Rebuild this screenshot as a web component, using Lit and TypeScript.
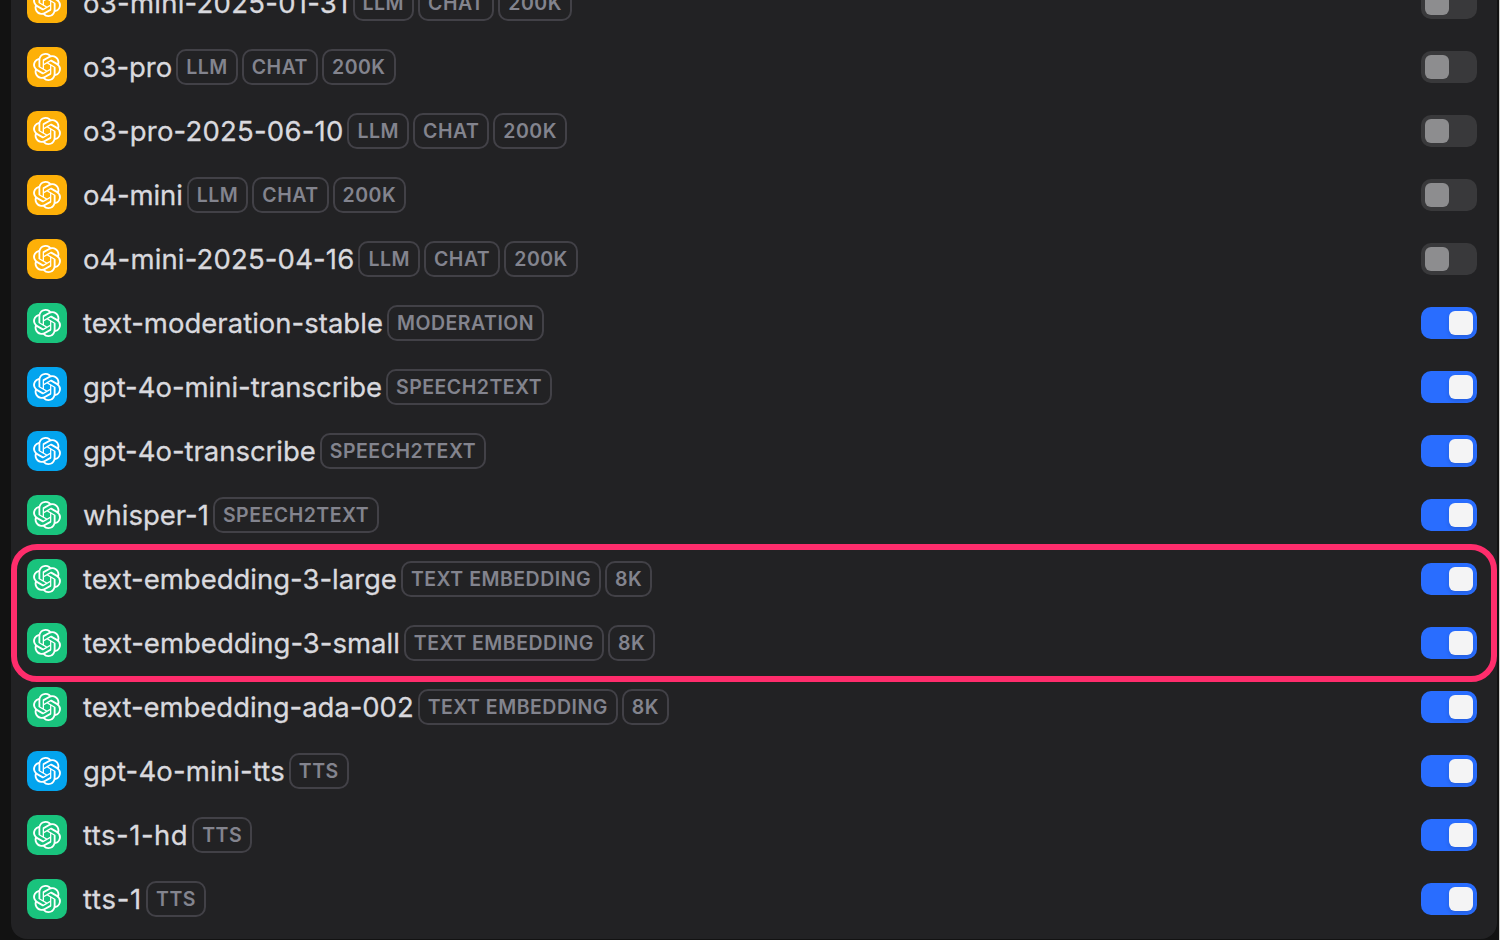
import { LitElement, html, css } from "lit";
import { customElement, property } from "lit/decorators.js";
import { classMap } from "lit/directives/class-map.js";
import { styleMap } from "lit/directives/style-map.js";

type Tone = "amber" | "green" | "blue";

interface Model {
  name: string;
  tone: Tone;
  tracking: number;
  tags: string[];
  on: boolean;
}

const m = (name: string, tone: Tone, tracking: number, on: boolean, ...tags: string[]): Model => ({
  name, tone, tracking, on, tags,
});

const BEFORE: Model[] = [
  m("o3-mini-2025-01-31", "amber", 0.26, false, "LLM", "CHAT", "200K"),
  m("o3-pro", "amber", -0.03, false, "LLM", "CHAT", "200K"),
  m("o3-pro-2025-06-10", "amber", 0.21, false, "LLM", "CHAT", "200K"),
  m("o4-mini", "amber", -0.12, false, "LLM", "CHAT", "200K"),
  m("o4-mini-2025-04-16", "amber", 0.16, false, "LLM", "CHAT", "200K"),
  m("text-moderation-stable", "green", 0.01, true, "MODERATION"),
  m("gpt-4o-mini-transcribe", "blue", -0.03, true, "SPEECH2TEXT"),
  m("gpt-4o-transcribe", "blue", -0.03, true, "SPEECH2TEXT"),
  m("whisper-1", "green", 0, true, "SPEECH2TEXT"),
];
const MARKED: Model[] = [
  m("text-embedding-3-large", "green", -0.01, true, "TEXT EMBEDDING", "8K"),
  m("text-embedding-3-small", "green", 0.01, true, "TEXT EMBEDDING", "8K"),
];
const AFTER: Model[] = [
  m("text-embedding-ada-002", "green", -0.05, true, "TEXT EMBEDDING", "8K"),
  m("gpt-4o-mini-tts", "blue", 0.15, true, "TTS"),
  m("tts-1-hd", "green", 0.5, true, "TTS"),
  m("tts-1", "green", 0.72, true, "TTS"),
];

@customElement("model-icon")
class ModelIcon extends LitElement {
  @property() tone: Tone = "green";
  static styles = css`
    :host { display: block; flex: none; }
    .tile {
      display: flex; align-items: center; justify-content: center;
      width: 40px; height: 40px; border-radius: 10px;
    }
    .amber { background: #fdb008; }
    .green { background: #19c37d; }
    .blue { background: #03a4ee; }
    svg { display: block; width: 28px; height: 28px; fill: #fff; }
  `;
  render() {
    return html`<div class="tile ${this.tone}">
      <svg viewBox="0 0 24 24" aria-hidden="true">
        <path d="M22.2819 9.8211a5.9847 5.9847 0 0 0-.5157-4.9108 6.0462 6.0462 0 0 0-6.5098-2.9A6.0651 6.0651 0 0 0 4.9807 4.1818a5.9847 5.9847 0 0 0-3.9977 2.9 6.0462 6.0462 0 0 0 .7427 7.0966 5.98 5.98 0 0 0 .511 4.9107 6.051 6.051 0 0 0 6.5146 2.9001A5.9847 5.9847 0 0 0 13.2599 24a6.0557 6.0557 0 0 0 5.7718-4.2058 5.9894 5.9894 0 0 0 3.9977-2.9001 6.0557 6.0557 0 0 0-.7475-7.0729zm-9.022 12.6081a4.4755 4.4755 0 0 1-2.8764-1.0408l.1419-.0804 4.7783-2.7582a.7948.7948 0 0 0 .3927-.6813v-6.7369l2.02 1.1686a.071.071 0 0 1 .038.052v5.5826a4.504 4.504 0 0 1-4.4945 4.4944zm-9.6607-4.1254a4.4708 4.4708 0 0 1-.5346-3.0137l.142.0852 4.783 2.7582a.7712.7712 0 0 0 .7806 0l5.8428-3.3685v2.3324a.0804.0804 0 0 1-.0332.0615L9.74 19.9502a4.4992 4.4992 0 0 1-6.1408-1.6464zM2.3408 7.8956a4.485 4.485 0 0 1 2.3655-1.9728V11.6a.7664.7664 0 0 0 .3879.6765l5.8144 3.3543-2.0201 1.1685a.0757.0757 0 0 1-.071 0l-4.8303-2.7865A4.504 4.504 0 0 1 2.3408 7.872zm16.5963 3.8558L13.1038 8.364 15.1192 7.2a.0757.0757 0 0 1 .071 0l4.8303 2.7913a4.4944 4.4944 0 0 1-.6765 8.1042v-5.6772a.79.79 0 0 0-.407-.667zm2.0107-3.0231l-.142-.0852-4.7735-2.7818a.7759.7759 0 0 0-.7854 0L9.409 9.2297V6.8974a.0662.0662 0 0 1 .0284-.0615l4.8303-2.7866a4.4992 4.4992 0 0 1 6.6802 4.66zM8.3065 12.863l-2.02-1.1638a.0804.0804 0 0 1-.038-.0567V6.0742a4.4992 4.4992 0 0 1 7.3757-3.4537l-.142.0805L8.704 5.459a.7948.7948 0 0 0-.3927.6813zm1.0976-2.3654l2.602-1.4998 2.6069 1.4998v2.9994l-2.5974 1.4997-2.6067-1.4997Z"/>
      </svg>
    </div>`;
  }
}

@customElement("toggle-switch")
class ToggleSwitch extends LitElement {
  @property({ type: Boolean }) on = false;
  static styles = css`
    :host { display: block; flex: none; }
    .track {
      display: flex; box-sizing: border-box; width: 56px; height: 32px;
      padding: 4px; border-radius: 10px; background: #39393b;
    }
    .track.on { background: #296dff; justify-content: flex-end; }
    .knob { width: 24px; height: 24px; border-radius: 6px; background: #8d8d8f; }
    .on .knob { background: #f4f4f5; box-shadow: 0 2px 4px rgba(9, 9, 11, 0.14); }
  `;
  render() {
    return html`<div class=${classMap({ track: true, on: this.on })} role="switch" aria-checked=${this.on}>
      <div class="knob"></div>
    </div>`;
  }
}

@customElement("model-row")
class ModelRow extends LitElement {
  @property({ attribute: false }) model!: Model;
  static styles = css`
    :host { display: block; }
    .row { display: flex; align-items: center; height: 64px; padding: 0 20px 0 16px; }
    .name {
      margin-left: 16px; color: #d9d9de; font-size: 27.5px; font-weight: 400;
      line-height: 36px; white-space: nowrap; -webkit-text-stroke: 0.3px #d9d9de;
    }
    .tags { display: flex; gap: 4px; margin-left: 4px; flex: 1; }
    .tag {
      box-sizing: border-box; height: 36px; padding: 0 8px; border: 2px solid #424147;
      border-radius: 10px; color: #83848e; font-size: 19.5px; font-weight: 600;
      line-height: 32px; letter-spacing: 0.5px; white-space: nowrap;
    }
  `;
  render() {
    const { name, tone, tags, on, tracking } = this.model;
    return html`<div class="row">
      <model-icon .tone=${tone}></model-icon>
      <div class="name" style=${styleMap({ letterSpacing: `${tracking}px` })}>${name}</div>
      <div class="tags">${tags.map((t) => html`<span class="tag">${t}</span>`)}</div>
      <toggle-switch .on=${on}></toggle-switch>
    </div>`;
  }
}

@customElement("app-root")
class AppRoot extends LitElement {
  static styles = css`
    :host {
      display: block; box-sizing: border-box; width: 1500px; height: 940px; overflow: hidden;
      padding: 0 2px 1px 11px; background: #121212; border-right: 1px solid #d0cfcc;
      font-family: Inter, "Liberation Sans", sans-serif;
    }
    .panel {
      display: flex; flex-direction: column; justify-content: flex-end; box-sizing: border-box;
      height: 939px; padding-bottom: 8px; overflow: hidden;
      background: #222224; border-radius: 0 0 16px 16px;
    }
    .list { flex: none; }
    .marked { position: relative; }
    .outline {
      position: absolute; inset: -3px 0 -7px 0; box-sizing: border-box;
      border: 6px solid #ff2d6c; border-radius: 26px; pointer-events: none;
    }
  `;
  render() {
    const rows = (list: Model[]) => list.map((x) => html`<model-row .model=${x}></model-row>`);
    return html`<div class="panel">
      <div class="list">
        ${rows(BEFORE)}
        <div class="marked">${rows(MARKED)}<div class="outline"></div></div>
        ${rows(AFTER)}
      </div>
    </div>`;
  }
}
